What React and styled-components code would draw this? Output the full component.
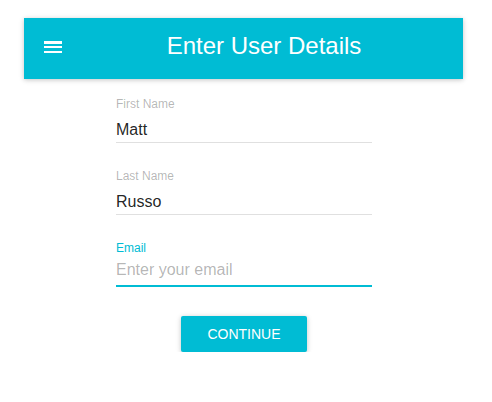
import React from 'react';
import styled, { createGlobalStyle } from 'styled-components';

const GlobalStyle = createGlobalStyle`
    body {
        margin: 0;
        background: #fff;
        font-family: "Liberation Sans", Arial, sans-serif;
    }
`

const fields = [
    { label: 'First Name', value: 'Matt' },
    { label: 'Last Name', value: 'Russo' },
    { label: 'Email', placeholder: 'Enter your email', focused: true },
];

const MenuIcon = () => (
    <svg width="24" height="24" viewBox="0 0 24 24" fill="#fff">
        <path d="M3 18h18v-2H3v2zm0-5h18v-2H3v2zm0-6v2h18V6H3z" />
    </svg>
);

const App = () => {

    return(
        <Page>
            <GlobalStyle />
            <AppBar>
                <MenuButton type="button" aria-label="menu">
                    <MenuIcon />
                </MenuButton>
                <Title>Enter User Details</Title>
            </AppBar>
            <Form>
                {fields.map((f) => (
                    <Field key={f.label}>
                        <Label focused={f.focused}>{f.label}</Label>
                        <Input
                            focused={f.focused}
                            defaultValue={f.value}
                            placeholder={f.placeholder}
                        />
                    </Field>
                ))}
                <ContinueButton type="button">Continue</ContinueButton>
            </Form>
        </Page>
    )
}

export default App;

const Page = styled.div`
    width: 439px;
    padding: 18px 0 0 24px;
`

const AppBar = styled.header`
    display: flex;
    align-items: center;
    height: 61px;
    box-sizing: border-box;
    padding: 0 0 3px 17px;
    background: #00bcd4;
    box-shadow: 0 1px 6px rgba(0,0,0,0.12), 0 1px 4px rgba(0,0,0,0.12);
`

const MenuButton = styled.button`
    display: flex;
    width: 24px;
    height: 24px;
    padding: 0;
    border: none;
    background: none;
    cursor: pointer;
`

const Title = styled.h1`
    flex: 1;
    margin: 0;
    padding-bottom: 3px;
    font-size: 24px;
    font-weight: normal;
    line-height: 28px;
    color: #fff;
    text-align: center;
`

const Form = styled.div`
    display: flex;
    flex-direction: column;
    gap: 26px;
    padding: 18px 91px 0 92px;
`

const Field = styled.div`
    display: flex;
    flex-direction: column;
`

const Label = styled.label`
    font-size: 12px;
    line-height: 14px;
    color: ${p => p.focused ? '#00bcd4' : 'rgba(0,0,0,0.3)'};
`

const Input = styled.input`
    display: block;
    width: 100%;
    height: 26px;
    box-sizing: border-box;
    margin: 6px 0 0;
    padding: 0 0 ${p => p.focused ? '6px' : '0'};
    border: none;
    border-bottom: ${p => p.focused ? '2px solid #00bcd4' : '1px solid #e0e0e0'};
    outline: none;
    background: transparent;
    font-family: "Liberation Sans", Arial, sans-serif;
    font-size: 16px;
    color: rgba(0,0,0,0.87);

    &::placeholder {
        color: rgba(0,0,0,0.3);
    }
`

const ContinueButton = styled.button`
    align-self: center;
    height: 36px;
    margin-top: 3px;
    padding: 0 26px;
    border: none;
    border-radius: 2px;
    background: #00bcd4;
    box-shadow: 0 1px 6px rgba(0,0,0,0.12), 0 1px 4px rgba(0,0,0,0.12);
    font-family: "Liberation Sans", Arial, sans-serif;
    font-size: 14px;
    text-transform: uppercase;
    color: #fff;
    cursor: pointer;
`
